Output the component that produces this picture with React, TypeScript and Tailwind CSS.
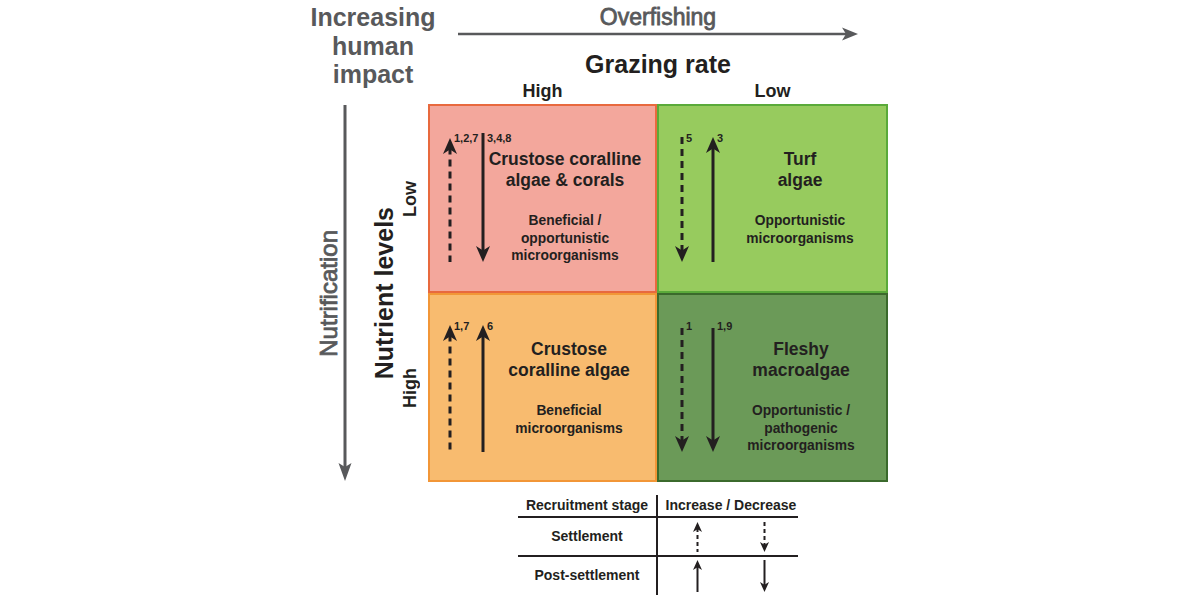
import React from 'react';

const INK = '#231f20';
const GRAY = '#58595b';

type ArrowProps = { up?: boolean; dashed?: boolean; len: number; w?: number; head?: number; stroke?: number; dash?: string; className?: string };

const Arrow = ({ up, dashed, len, w = 14, head = 16, stroke = 3, dash = '7 5', className = '' }: ArrowProps) => {
  const cx = w / 2;
  const y1 = up ? head * 0.6 : 0;
  const y2 = up ? len : len - head * 0.6;
  const pts = up
    ? `${cx},0 ${w},${head} ${cx},${head * 0.72} 0,${head}`
    : `${cx},${len} ${w},${len - head} ${cx},${len - head * 0.72} 0,${len - head}`;
  return (
    <svg width={w} height={len} className={`block shrink-0 ${className}`}>
      <line x1={cx} x2={cx} y1={y1} y2={y2} stroke={INK} strokeWidth={stroke} strokeDasharray={dashed ? dash : undefined} />
      <polygon points={pts} fill={INK} />
    </svg>
  );
};

type CellArrow = { up: boolean; dashed: boolean; len: number; top: string; label: string; labelTop: string };

type CellData = {
  box: string;
  arrowsPad: string;
  slot: string;
  textPad: string;
  title: string[];
  sub: string[];
  arrows: CellArrow[];
};

const cells: CellData[] = [
  {
    box: 'bg-[#f3a79c] border-[#e8693e]',
    arrowsPad: 'pl-[13px]',
    slot: 'w-[33px]',
    textPad: 'pt-[43px] pr-[34px]',
    title: ['Crustose coralline', 'algae & corals'],
    sub: ['Beneficial /', 'opportunistic', 'microorganisms'],
    arrows: [
      { up: true, dashed: true, len: 124, top: 'mt-[32px]', label: '1,2,7', labelTop: 'mt-[27px]' },
      { up: false, dashed: false, len: 129, top: 'mt-[27px]', label: '3,4,8', labelTop: 'mt-[27px]' },
    ],
  },
  {
    box: 'bg-[#97cb5e] border-[#5aaa3a]',
    arrowsPad: 'pl-[16px]',
    slot: 'w-[31px]',
    textPad: 'pt-[43px] pr-[23px]',
    title: ['Turf', 'algae'],
    sub: ['Opportunistic', 'microorganisms'],
    arrows: [
      { up: false, dashed: true, len: 125, top: 'mt-[31px]', label: '5', labelTop: 'mt-[27px]' },
      { up: true, dashed: false, len: 125, top: 'mt-[31px]', label: '3', labelTop: 'mt-[27px]' },
    ],
  },
  {
    box: 'bg-[#f8bb6f] border-[#f29637]',
    arrowsPad: 'pl-[13px]',
    slot: 'w-[33px]',
    textPad: 'pt-[44px] pr-[26px]',
    title: ['Crustose', 'coralline algae'],
    sub: ['Beneficial', 'microorganisms'],
    arrows: [
      { up: true, dashed: true, len: 127, top: 'mt-[30px]', label: '1,7', labelTop: 'mt-[26px]' },
      { up: true, dashed: false, len: 127, top: 'mt-[30px]', label: '6', labelTop: 'mt-[26px]' },
    ],
  },
  {
    box: 'bg-[#6b9a58] border-[#3b6a2c]',
    arrowsPad: 'pl-[16px]',
    slot: 'w-[31px]',
    textPad: 'pt-[44px] pr-[21px]',
    title: ['Fleshy', 'macroalgae'],
    sub: ['Opportunistic /', 'pathogenic', 'microorganisms'],
    arrows: [
      { up: false, dashed: true, len: 124, top: 'mt-[33px]', label: '1', labelTop: 'mt-[26px]' },
      { up: false, dashed: false, len: 124, top: 'mt-[33px]', label: '1,9', labelTop: 'mt-[26px]' },
    ],
  },
];

const Cell = ({ c }: { c: CellData }) => (
  <div className={`flex border-2 ${c.box}`}>
    <div className={`flex shrink-0 ${c.arrowsPad}`}>
      {c.arrows.map((a, i) => (
        <div key={i} className={`flex items-start shrink-0 ${c.slot}`}>
          <Arrow up={a.up} dashed={a.dashed} len={a.len} className={a.top} />
          <span className={`-ml-[3px] text-[11px] leading-none font-bold whitespace-nowrap ${a.labelTop}`}>{a.label}</span>
        </div>
      ))}
    </div>
    <div className={`flex-1 min-w-0 flex flex-col items-center text-center font-bold text-[#231f20] ${c.textPad}`}>
      <div className="text-[17.5px] leading-[21px]">
        {c.title.map((t) => (
          <div key={t} className="whitespace-nowrap">{t}</div>
        ))}
      </div>
      <div className="mt-[21px] text-[13.8px] leading-[17.5px]">
        {c.sub.map((t) => (
          <div key={t} className="whitespace-nowrap">{t}</div>
        ))}
      </div>
    </div>
  </div>
);

export default function App() {
  return (
    <div className="w-[1200px] h-[600px] bg-white overflow-hidden flex flex-col text-[#231f20] font-['Liberation_Sans',Arial,sans-serif]">
      {/* Header */}
      <div className="flex h-[104px] shrink-0">
        <div className="w-[428px] shrink-0">
          <div className="ml-[303px] w-[140px] pt-[3px] text-center text-[25px] leading-[28.5px] font-bold text-[#58595b]">
            <div className="whitespace-nowrap">Increasing</div>
            <div className="whitespace-nowrap">human</div>
            <div className="whitespace-nowrap">impact</div>
          </div>
        </div>
        <div className="w-[460px] shrink-0 flex flex-col items-center">
          <div className="pt-[5px] text-[23px] leading-[24px] text-[#58595b] [-webkit-text-stroke:0.8px_#58595b]">Overfishing</div>
          <svg width={400} height={14} className="block -mt-[2px]">
            <line x1={0} x2={388} y1={7} y2={7} stroke={GRAY} strokeWidth={2.5} />
            <polygon points="400,7 384,0.5 388,7 384,13.5" fill={GRAY} />
          </svg>
          <div className="mt-[9px] text-[25px] leading-[28px] font-bold">Grazing rate</div>
          <div className="mt-[3px] w-full grid grid-cols-[229px_231px] text-center text-[18px] leading-[20px] font-bold">
            <div>High</div>
            <div>Low</div>
          </div>
        </div>
      </div>

      {/* Matrix */}
      <div className="flex h-[378px] shrink-0">
        <div className="ml-[317px] w-[24px] shrink-0 flex items-center justify-center">
          <span className="[writing-mode:vertical-rl] rotate-180 text-[24px] leading-none whitespace-nowrap text-[#58595b] [-webkit-text-stroke:0.8px_#58595b]">Nutrification</span>
        </div>
        <svg width={14} height={378} className="block shrink-0 -ml-[3px]">
          <line x1={7} x2={7} y1={1} y2={364} stroke={GRAY} strokeWidth={3} />
          <polygon points="7,377 0.5,359 7,363 13.5,359" fill={GRAY} />
        </svg>
        <div className="ml-[20px] w-[25px] shrink-0 flex items-center justify-center">
          <span className="[writing-mode:vertical-rl] rotate-180 text-[25px] leading-none font-bold whitespace-nowrap">Nutrient levels</span>
        </div>
        <div className="ml-[4px] w-[18px] shrink-0 grid grid-rows-2">
          <div className="flex items-center justify-center">
            <span className="[writing-mode:vertical-rl] rotate-180 text-[18px] leading-none font-bold">Low</span>
          </div>
          <div className="flex items-center justify-center">
            <span className="[writing-mode:vertical-rl] rotate-180 text-[18px] leading-none font-bold">High</span>
          </div>
        </div>
        <div className="ml-[9px] grid grid-cols-[229px_231px] grid-rows-[189px_189px]">
          {cells.map((c, i) => (
            <Cell key={i} c={c} />
          ))}
        </div>
      </div>

      {/* Legend table */}
      <div className="ml-[518px] mt-[13px] w-[280px] grid grid-cols-[140px_140px] text-[14px] font-bold">
        <div className="h-[23px] border-r-2 border-b-2 border-[#231f20] flex items-center justify-center whitespace-nowrap">Recruitment stage</div>
        <div className="h-[23px] border-b-2 border-[#231f20] flex items-center justify-center pl-[6px] whitespace-nowrap">Increase / Decrease</div>

        <div className="h-[39px] border-r-2 border-b-2 border-[#231f20] flex items-center justify-center">Settlement</div>
        <div className="h-[39px] border-b-2 border-[#231f20] flex items-start pl-[35px] gap-[58px]">
          <Arrow up dashed len={30} w={9} head={10} stroke={2} dash="4 3" className="mt-[4px]" />
          <Arrow dashed len={30} w={9} head={10} stroke={2} dash="4 3" className="mt-[4px]" />
        </div>

        <div className="h-[38px] border-r-2 border-[#231f20] flex items-center justify-center pb-[2px]">Post-settlement</div>
        <div className="h-[38px] flex items-start pl-[35px] gap-[58px]">
          <Arrow up len={32} w={9} head={10} stroke={2} className="mt-[3px]" />
          <Arrow len={32} w={9} head={10} stroke={2} className="mt-[3px]" />
        </div>
      </div>
    </div>
  );
}
